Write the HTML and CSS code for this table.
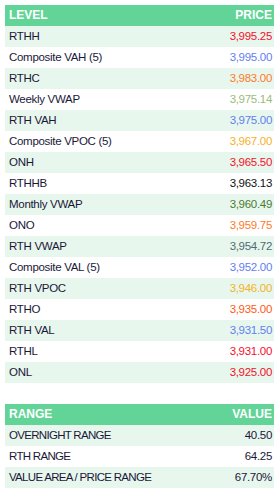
FILE: index.html
```html
<!DOCTYPE html>
<html>
<head>
<meta charset="utf-8">
<link rel="stylesheet" href="styles.css">
</head>
<body>
<table class="tbl">
  <thead>
    <tr><th class="l">LEVEL</th><th class="r">PRICE</th></tr>
  </thead>
  <tbody>
    <tr><td>RTHH</td><td class="r red">3,995.25</td></tr>
    <tr><td>Composite VAH (5)</td><td class="r blue">3,995.00</td></tr>
    <tr><td>RTHC</td><td class="r orange">3,983.00</td></tr>
    <tr><td>Weekly VWAP</td><td class="r lgreen">3,975.14</td></tr>
    <tr><td>RTH VAH</td><td class="r blue">3,975.00</td></tr>
    <tr><td>Composite VPOC (5)</td><td class="r gold">3,967.00</td></tr>
    <tr><td>ONH</td><td class="r red">3,965.50</td></tr>
    <tr><td>RTHHB</td><td class="r black">3,963.13</td></tr>
    <tr><td>Monthly VWAP</td><td class="r dgreen">3,960.49</td></tr>
    <tr><td>ONO</td><td class="r orange">3,959.75</td></tr>
    <tr><td>RTH VWAP</td><td class="r slate">3,954.72</td></tr>
    <tr><td>Composite VAL (5)</td><td class="r blue">3,952.00</td></tr>
    <tr><td>RTH VPOC</td><td class="r gold">3,946.00</td></tr>
    <tr><td>RTHO</td><td class="r ored">3,935.00</td></tr>
    <tr><td>RTH VAL</td><td class="r blue">3,931.50</td></tr>
    <tr><td>RTHL</td><td class="r red">3,931.00</td></tr>
    <tr><td>ONL</td><td class="r red">3,925.00</td></tr>
  </tbody>
</table>
<table class="tbl second">
  <thead>
    <tr><th class="l">RANGE</th><th class="r">VALUE</th></tr>
  </thead>
  <tbody>
    <tr><td class="caps">OVERNIGHT RANGE</td><td class="r">40.50</td></tr>
    <tr><td class="caps">RTH RANGE</td><td class="r">64.25</td></tr>
    <tr><td class="caps">VALUE AREA / PRICE RANGE</td><td class="r">67.70%</td></tr>
  </tbody>
</table>
</body>
</html>
```
FILE: styles.css
```css
body {
  margin: 5px;
  background: #ffffff;
  font-family: "Liberation Sans", Arial, sans-serif;
  font-size: 11.5px;
  color: #1a1838;
}
.tbl {
  width: 269px;
  border-collapse: collapse;
  border-spacing: 0;
}
.tbl.second {
  margin-top: 21px;
}
.tbl th {
  background: #62d497;
  color: #ffffff;
  font-family: "Liberation Sans", Arial, sans-serif;
  font-weight: bold;
  font-size: 12px;
  height: 21px;
  padding: 0 2px 0 4px;
  line-height: 21px;
}
.tbl td {
  height: 21px;
  padding: 0 2px 0 4px;
  line-height: 21px;
  white-space: nowrap;
  letter-spacing: -0.3px;
}
.tbl td.caps {
  letter-spacing: -0.7px;
}
.tbl tbody tr:nth-child(odd) td {
  background: #e8f7ed;
}
.l { text-align: left; }
.r { text-align: right; }
.red { color: #f5102a; }
.blue { color: #5f80f0; }
.orange { color: #ff7a2a; }
.lgreen { color: #9cba7c; }
.gold { color: #f5b12a; }
.black { color: #111111; }
.dgreen { color: #4c7a32; }
.slate { color: #4d6d73; }
.ored { color: #ff5a16; }
```
